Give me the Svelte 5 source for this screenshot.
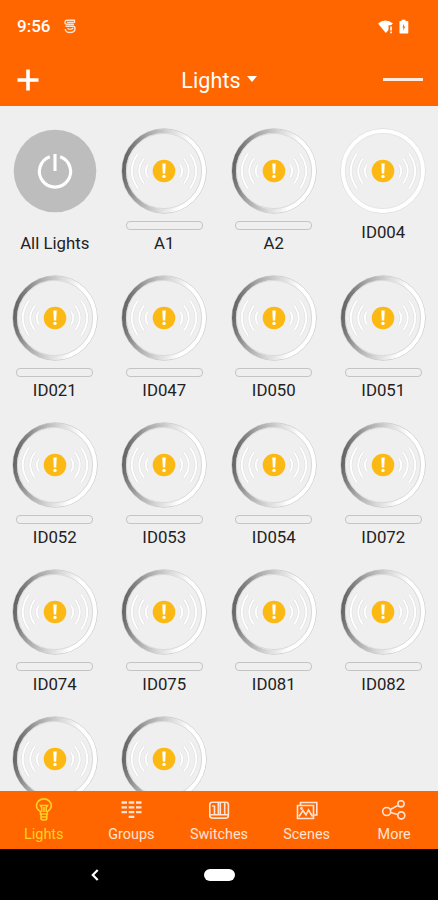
<script>
    let active = 'Lights';
    const tabs = ['Lights', 'Groups', 'Switches', 'Scenes', 'More'];
    // the last two are still unnamed
    const names = ['A1', 'A2', 'ID004', 'ID021', 'ID047', 'ID050', 'ID051', 'ID052', 'ID053', 'ID054',
        'ID072', 'ID074', 'ID075', 'ID081', 'ID082', '', ''];
    // ID004 can only be switched, so it has no level bar
    const lights = names.map((name) => ({ name, dimmable: name !== 'ID004' }));
    const waves = 'M16-6.5Q20.5 0 16 6.5M20-12.5Q29.5 0 20 12.5M26-17.5Q38.5 0 26 17.5';
</script>

<div class="phone">
    <header>
        <div class="status">
            <span class="time">9:56</span>
            <svg class="notif" width="12" height="15" viewBox="0 0 12 15">
                <path d="M11 1.2H3Q1 1.2 1 3.5Q1 5.3 3 5.3H10M10.5 1.5V4M1.5 7.2H9Q11 7.2 11 9.5Q11 13.5 6 13.5Q1.5 13.5 1.2 10M3 3.4H9.5M3.5 9.4Q7 11.5 9 9" />
            </svg>
            <svg class="signal" width="32" height="16" viewBox="0 0 32 16">
                <path d="M0 4.5Q7.3-1.5 15 4.5L13 6.3H10.5V11L7.8 14Z" />
                <path d="M12.2 7.5h1.7v4h-1.7zM12.2 12.5h1.7v1.7h-1.7z" />
                <path fill-rule="evenodd" d="M21.5 2H23.5V.7H27.5V2H29.5Q30.3 2 30.3 3V13.5Q30.3 14.5 29.5 14.5H22.5Q21.5 14.5 21.5 13.5ZM26 4.5L24.5 8.5H25.4V11.5L27.2 7.6H26Z" />
            </svg>
        </div>
        <div class="bar">
            <svg width="22" height="22" viewBox="0 0 22 22"><path d="M11 .5V21.5M.5 11H21.5" stroke="#fff" stroke-width="3.6" /></svg>
            <div class="title">Lights<i></i></div>
            <span class="minus"></span>
        </div>
    </header>

    <main>
        <div class="cell">
            <svg class="dial" width="88" height="88" viewBox="-44 -44 88 88">
                <circle r="41.3" fill="#bdbdbd" />
                <path d="M-5.2-14.2A15.6 15.6 0 1 0 5.2-14.2M0-17V0" fill="none" stroke="#fff" stroke-width="3.1" />
            </svg>
            <div class="level hidden"></div>
            <span class="name">All Lights</span>
        </div>
        {#each lights as light, i}
            <div class="cell">
                <svg class="dial" width="88" height="88" viewBox="-44 -44 88 88">
                    <defs>
                        <linearGradient id="rim{i}" x1="0" y1=".42" x2="1" y2=".58">
                            <stop offset="0" stop-color="#666" />
                            <stop offset=".22" stop-color="#a5a5a5" />
                            <stop offset=".5" stop-color="#d9d9d9" />
                            <stop offset=".75" stop-color="#fff" />
                        </linearGradient>
                    </defs>
                    <circle r="42.2" fill="none" stroke={light.dimmable ? '#c9c9c9' : '#dcdcdc'} stroke-width="1" />
                    <circle r="40" fill="none" stroke={light.dimmable ? `url(#rim${i})` : '#fff'} stroke-width="4" />
                    <circle r="37.6" fill="none" stroke={light.dimmable ? '#d4d4d4' : '#e2e2e2'} stroke-width=".8" />
                    {#each [1, -1] as side}
                        <g transform="scale({side} 1)" fill="none">
                            <path d={waves} stroke="#dfdfdf" stroke-width="2.9" />
                            <path d={waves} stroke="#fff" stroke-width="1.9" />
                        </g>
                    {/each}
                    <circle r="11.3" fill="#fdb913" />
                    <path d="M-1.7-7.5H1.7L1.2 2.5H-1.2Z" fill="#fff" />
                    <circle cy="5.4" r="1.7" fill="#fff" />
                </svg>
                {#if light.dimmable}
                    <div class="level"></div>
                {/if}
                {#if light.name}
                    <span class="name">{light.name}</span>
                {/if}
            </div>
        {/each}
    </main>

    <nav class="tabs">
        {#each tabs as tab}
            <div class="tab" class:active={tab === active}>
                <svg width="26" height="24" viewBox="0 0 26 24">
                    {#if tab === 'Lights'}
                        <path d="M9.5 16V13.6C6.8 11.8 5.5 9.8 5.5 7.8A7.4 6.9 0 0 1 20.3 7.8C20.3 9.8 19 11.8 16.3 13.6V16ZM10 16V20.5Q10 22 12.9 22Q15.8 22 15.8 20.5V16M10 19H16M10.7 14V9.5L9.5 7.5H16.5L15.2 9.5V14M13 9V14" />
                    {:else if tab === 'Groups'}
                        <path class="thick" d="M3.5 4.5H9M10.7 4.5H16.3M18 4.5H23.5M3.5 9.3H9M10.7 9.3H16.3M18 9.3H23.5M3.5 14.1H9M10.7 14.1H16.3M18 14.1H23.5M10.7 18.8H16.3" />
                    {:else if tab === 'Switches'}
                        <rect x="3.8" y="4.3" width="18.6" height="15.8" rx="2.5" />
                        <path d="M4 16.7H22M8.5 7.5V16.5M8.5 8H6M12.3 5V16.5M14.3 5V16.5M18.7 5V16.5" />
                    {:else if tab === 'Scenes'}
                        <path d="M6.5 7V4.5H22.8V17H20M3.5 7.5H19.5V20.5H3.5ZM5 18.5L9 12.5L12 17L14.5 12L18.5 18.5" />
                        <circle cx="7.5" cy="10.5" r=".6" />
                    {:else}
                        <circle cx="5.7" cy="13.5" r="4" />
                        <circle cx="20" cy="5.8" r="3.1" />
                        <circle cx="20.3" cy="17.4" r="3.5" />
                        <path d="M9.3 11.5L17.2 7.3M9.5 14.5L16.8 16.6" />
                    {/if}
                </svg>
                <span>{tab}</span>
            </div>
        {/each}
    </nav>

    <footer>
        <svg width="8" height="12" viewBox="0 0 8 12"><path d="M6.7 1L1.8 6L6.7 11" fill="none" stroke="#fff" stroke-width="2.2" /></svg>
        <span class="home"></span>
    </footer>
</div>

<style>
    :global(body) {
        background: #efefef;
        overflow: hidden;
    }
    .phone {
        display: flex;
        flex-direction: column;
        width: 438px;
        height: 900px;
        overflow: hidden;
        background: #efefef;
        font-family: Roboto, sans-serif;
    }
    header {
        flex: none;
        height: 106px;
        box-sizing: border-box;
        background: #ff6600;
        color: #fff;
    }
    .status {
        display: flex;
        align-items: center;
        height: 53px;
        padding: 0 28px 0 17px;
    }
    .time {
        width: 47px;
        font-size: 17px;
        font-weight: 500;
        line-height: 20px;
        margin-top: -2px;
    }
    .notif {
        fill: none;
        stroke: #ffe3d0;
        stroke-width: 1.4;
    }
    .signal {
        margin-left: auto;
        fill: #fff;
    }
    .bar {
        display: grid;
        grid-template-columns: 40px 1fr 40px;
        align-items: center;
        height: 53px;
        padding: 0 15px 0 17px;
    }
    .title {
        display: flex;
        align-items: center;
        justify-content: center;
        gap: 6px;
        font-size: 21.5px;
        letter-spacing: .1px;
        line-height: 28px;
        padding: 3px 2px 0 0;
    }
    .title i {
        border: 5px solid transparent;
        border-top: 6px solid #fff;
        border-bottom: 0;
        margin-top: -4px;
    }
    .minus {
        height: 3px;
        width: 40px;
        background: #ffebdd;
    }
    main {
        flex: 1;
        min-height: 0;
        overflow: hidden;
        display: grid;
        grid-template-columns: repeat(4, 109.5px);
        grid-auto-rows: 147px;
        padding-top: 21px;
    }
    .cell {
        display: flex;
        flex-direction: column;
        align-items: center;
    }
    .dial {
        flex: none;
        margin-bottom: 6px;
    }
    .level {
        flex: none;
        width: 77px;
        height: 9px;
        box-sizing: border-box;
        border: 1px solid #c4c4c4;
        border-radius: 4px;
        margin-bottom: 2px;
    }
    .hidden {
        visibility: hidden;
    }
    .name {
        font-size: 16.8px;
        line-height: 22px;
        color: #222;
    }
    .tabs {
        flex: none;
        display: grid;
        grid-template-columns: repeat(5, 1fr);
        height: 58px;
        background: #ff6600;
        color: #ffe3d5;
    }
    .tab {
        display: flex;
        flex-direction: column;
        align-items: center;
        padding-top: 7px;
        font-size: 14.4px;
        line-height: 26px;
    }
    .tab svg {
        flex: none;
        fill: none;
        stroke: currentColor;
        stroke-width: 1.6;
    }
    .tab .thick {
        stroke-width: 2.3;
    }
    .active {
        color: #ffd021;
    }
    footer {
        flex: none;
        display: flex;
        align-items: center;
        height: 51px;
        padding-left: 91px;
        background: #000;
    }
    .home {
        width: 31px;
        height: 12px;
        margin-left: 105px;
        border-radius: 6px;
        background: #fff;
    }
</style>
